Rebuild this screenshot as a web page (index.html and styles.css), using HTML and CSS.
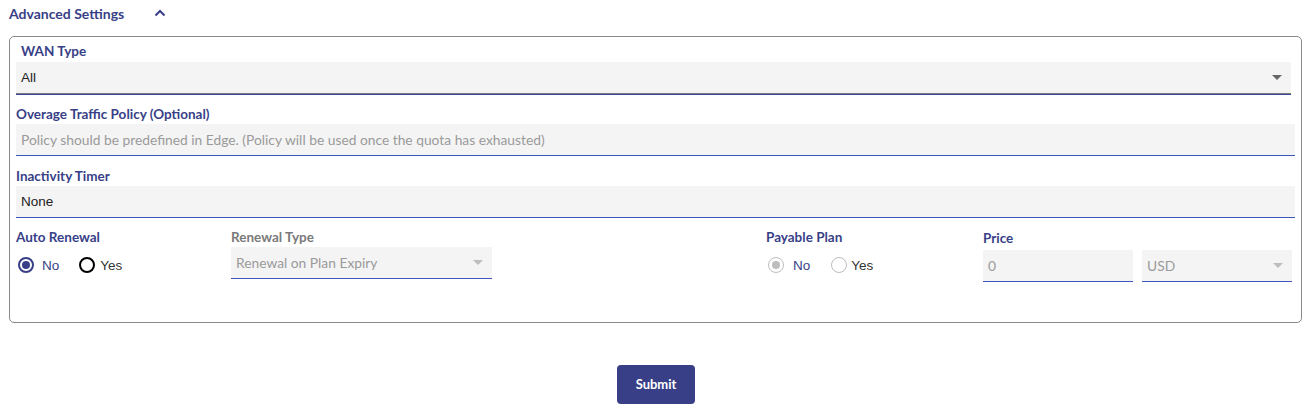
FILE: index.html
```html
<!DOCTYPE html>
<html>
<head>
<meta charset="utf-8">
<link rel="stylesheet" href="styles.css">
</head>
<body>
<div class="header">
  <span class="header-title">Advanced Settings</span>
  <svg class="chevron" width="12" height="8" viewBox="0 0 12 8"><path d="M1.5 6.5 L6 2 L10.5 6.5" fill="none" stroke="#383f87" stroke-width="2"/></svg>
</div>
<div class="panel">
  <div class="group group-wan">
    <div class="label label-wan">WAN Type</div>
    <div class="field field-wan">
      <span class="value">All</span>
      <span class="arrow"></span>
    </div>
  </div>
  <div class="group">
    <div class="label">Overage Traffic Policy (Optional)</div>
    <div class="field">
      <span class="placeholder">Policy should be predefined in Edge. (Policy will be used once the quota has exhausted)</span>
    </div>
  </div>
  <div class="group">
    <div class="label">Inactivity Timer</div>
    <div class="field">
      <span class="value">None</span>
    </div>
  </div>
  <div class="row">
    <div class="col col-auto">
      <div class="label">Auto Renewal</div>
      <div class="radios">
        <span class="radio on"></span><span class="radio-text sel">No</span>
        <span class="radio off"></span><span class="radio-text">Yes</span>
      </div>
    </div>
    <div class="col col-renew">
      <div class="label label-gray">Renewal Type</div>
      <div class="field field-small">
        <span class="placeholder">Renewal on Plan Expiry</span>
        <span class="arrow arrow-light"></span>
      </div>
    </div>
    <div class="col col-pay">
      <div class="label">Payable Plan</div>
      <div class="radios">
        <span class="radio dis-on"></span><span class="radio-text sel">No</span>
        <span class="radio dis-off"></span><span class="radio-text">Yes</span>
      </div>
    </div>
    <div class="col col-price">
      <div class="label label-price">Price</div>
      <div class="field field-small">
        <span class="placeholder">0</span>
      </div>
    </div>
    <div class="col col-cur">
      <div class="label label-price">&nbsp;</div>
      <div class="field field-small">
        <span class="placeholder">USD</span>
        <span class="arrow arrow-light"></span>
      </div>
    </div>
  </div>
</div>
<div class="actions">
  <button class="submit">Submit</button>
</div>
</body>
</html>
```

FILE: styles.css
```css
body {
  margin: 0;
  font-family: "Lato", "Liberation Sans", sans-serif;
  background: #fff;
}
.header {
  height: 28px;
  display: flex;
  align-items: center;
  padding-left: 9px;
}
.header-title {
  font-size: 14px;
  font-weight: 700;
  color: #383f87;
  margin-top: -2px;
}
.chevron {
  margin-left: 30px;
  margin-top: -3px;
}
.panel {
  margin: 8px 8px 0 9px;
  height: 287px;
  box-sizing: border-box;
  border: 1px solid #8a8a8a;
  border-radius: 5px;
  padding: 6px 6px 0 6px;
}
.group {
  margin-top: 12px;
}
.group-wan {
  margin-top: 0;
  margin-right: 4px;
}
.label {
  font-size: 13.5px;
  font-weight: 700;
  color: #383f87;
  line-height: 16px;
  margin-bottom: 2px;
  white-space: nowrap;
}
.label-wan {
  padding-left: 5px;
  margin-bottom: 3px;
}
.label-gray {
  color: #7a7a7a;
}
.label-price {
  margin-top: 1px;
  margin-bottom: 4px;
}
.field {
  position: relative;
  height: 31px;
  background: #f4f4f4;
  border-bottom: 1px solid #3d56b8;
  display: flex;
  align-items: center;
  padding-left: 5px;
  box-sizing: content-box;
}
.field-wan {
  border-bottom: 1px solid #7a7a7a;
  box-shadow: 0 1px 0 #3a4a9f;
}
.field-small {
  height: 31px;
}
.value {
  font-family: "Liberation Sans", Arial, sans-serif;
  font-size: 13.5px;
  color: #222;
}
.placeholder {
  font-family: "Lato", "Liberation Sans", sans-serif;
  font-size: 13.8px;
  color: #9a9a9a;
}
.arrow {
  position: absolute;
  right: 9px;
  top: 13px;
  width: 0;
  height: 0;
  border-left: 5px solid transparent;
  border-right: 5px solid transparent;
  border-top: 5px solid #666;
}
.arrow-light {
  border-top-color: #bdbdbd;
}
.row {
  display: flex;
  margin-top: 11px;
}
.col-auto { width: 215px; }
.col-renew { width: 261px; }
.col-pay { width: 217px; margin-left: 274px; }
.col-price { width: 150px; }
.col-cur { width: 150px; margin-left: 9px; }
.radios {
  display: flex;
  align-items: center;
  margin-top: 8px;
  height: 24px;
}
.radio {
  width: 16px;
  height: 16px;
  box-sizing: border-box;
  border-radius: 50%;
  border: 2px solid #000;
  position: relative;
  margin-left: 2px;
  flex: none;
}
.radio.on { border-color: #383f87; }
.radio.on::after, .radio.dis-on::after {
  content: "";
  position: absolute;
  left: 2px;
  top: 2px;
  width: 8px;
  height: 8px;
  border-radius: 50%;
  background: #383f87;
}
.radio.dis-on, .radio.dis-off {
  border: 1.5px solid #bdbdbd;
}
.radio.dis-on::after {
  background: #bdbdbd;
  left: 2.5px;
  top: 2.5px;
}
.radio.off {
  margin-left: 20px;
}
.radio.dis-off { margin-left: 21px; }
.radio-text {
  font-family: "Liberation Sans", Arial, sans-serif;
  font-size: 13.5px;
  color: #333;
  margin-left: 5px;
}
.radio-text.sel {
  color: #383f87;
  margin-left: 8px;
}
.col-pay .radio-text.sel { margin-left: 9px; }
.col-pay .radio-text { margin-left: 4px; }
.actions {
  display: flex;
  justify-content: center;
  margin-top: 42px;
}
.submit {
  width: 78px;
  height: 39px;
  background: #383f87;
  color: #fff;
  border: none;
  border-radius: 4px;
  font-family: "Lato", "Liberation Sans", sans-serif;
  font-size: 13px;
  font-weight: 700;
  margin-left: 2px;
  padding-bottom: 2px;
}
```
